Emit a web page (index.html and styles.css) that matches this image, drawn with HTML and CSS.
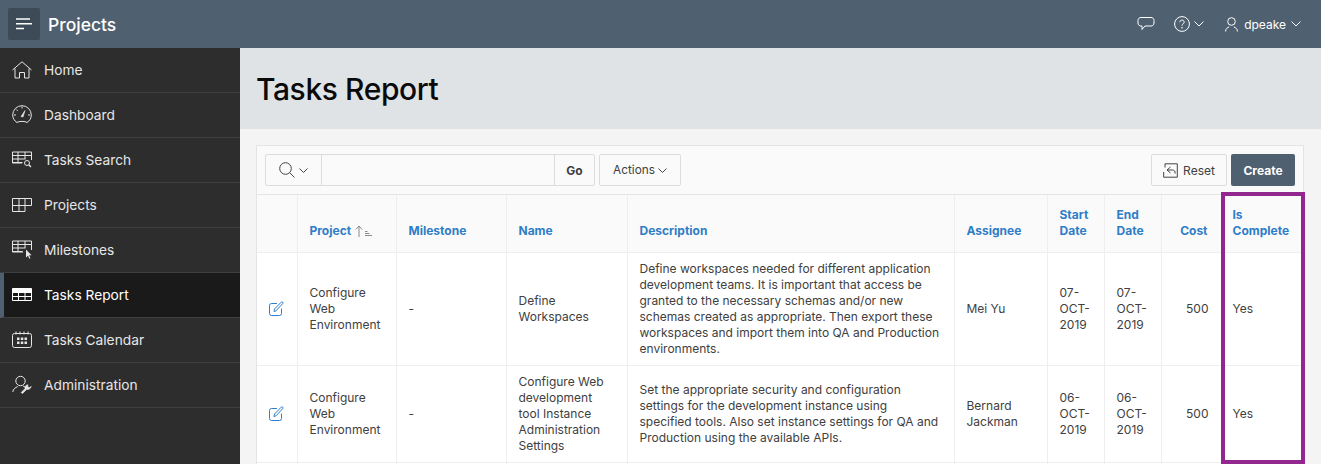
FILE: index.html
```html
<!DOCTYPE html>
<html lang="en">
<head>
  <meta charset="UTF-8">
  <title>Tasks Report</title>
  <link rel="stylesheet" href="styles.css">
</head>
<body>
  <header class="topbar">
    <button class="menu-btn" aria-label="Menu">
      <svg width="16" height="12" viewBox="0 0 16 12"><path d="M0 1h14M0 5.800h16M0 10.500h8" stroke="#fff" stroke-width="1.600" fill="none"/></svg>
    </button>
    <span class="app-name">Projects</span>
    <div class="top-actions">
      <svg class="top-chat" width="18" height="16" viewBox="0 0 18 16"><path d="M4 1.500h10c1.800 0 3 1.200 3 3v2.500c0 1.800-1.200 3-3 3H8l-3 3.500v-3.500H4c-1.800 0-3-1.200-3-3V4.500c0-1.800 1.200-3 3-3z" stroke="#fff" fill="none"/></svg>
      <svg class="top-help" width="16" height="16" viewBox="0 0 16 16"><circle cx="8" cy="8" r="7.400" stroke="#fff" fill="none"/><path d="M5.800 6.200c0-1.300 1-2.100 2.200-2.100s2.200.8 2.200 2c0 1.700-2.200 1.700-2.200 3.500" stroke="#fff" fill="none"/><circle cx="8" cy="11.700" r=".8" fill="#fff"/></svg>
      <svg class="chev top-chev" width="10" height="6" viewBox="0 0 10 6"><path d="M.5.500 5 5 9.500.500" stroke="#fff" fill="none"/></svg>
      <svg class="top-user" width="13" height="15" viewBox="0 0 13 15"><circle cx="6.500" cy="4.500" r="3.800" stroke="#fff" fill="none"/><path d="M.6 14.500c0-2.800 1.800-3.900 3.500-4.600M12.400 14.500c0-2.800-1.800-3.900-3.500-4.600" stroke="#fff" fill="none"/></svg>
      <span class="user-name">dpeake</span>
      <svg class="chev" width="10" height="6" viewBox="0 0 10 6"><path d="M.5.500 5 5 9.500.500" stroke="#fff" fill="none"/></svg>
    </div>
  </header>

  <div class="layout">
    <nav class="sidebar">
      <a class="nav-item">
        <svg width="20" height="18" viewBox="0 0 20 18"><path d="M.5 9 10 .8 19.500 9M3 7.500V17h4.500v-5.500h5V17H17V7.500" stroke="#e6e6e6" fill="none"/></svg>
        Home
      </a>
      <a class="nav-item">
        <svg width="20" height="20" viewBox="0 0 20 20"><path d="M5 17.500c-2.600-1.600-4.300-4.300-4.300-7.500a9.300 9.300 0 0 1 18.600 0c0 3.200-1.700 5.900-4.300 7.500-1.400-1.500-8.600-1.500-10 0z" stroke="#e6e6e6" fill="none"/><path d="M9 11.500 13 5.500 11 12z" stroke="#e6e6e6" fill="#e6e6e6" stroke-width=".6"/><path d="M10 1.500v2M2 10h2M16 10h2M4.300 4.500l1.400 1.400" stroke="#e6e6e6" fill="none"/></svg>
        Dashboard
      </a>
      <a class="nav-item">
        <svg width="20" height="18" viewBox="0 0 20 18"><path d="M10 12H.5V1h19v8M.5 4.500h19M.5 8h13M.5 11.500h10M6 1v11M13 1v7" stroke="#e6e6e6" fill="none"/><circle cx="15" cy="12" r="2.500" stroke="#e6e6e6" fill="none"/><path d="M16.800 13.800 19 16" stroke="#e6e6e6" stroke-width="1.300"/></svg>
        Tasks Search
      </a>
      <a class="nav-item">
        <svg width="20" height="14" viewBox="0 0 20 14"><path d="M.5.500h19v7h-6.500v6H.5zM.5 7.500H13M7 .5v13M13 .5v7" stroke="#e6e6e6" fill="none"/></svg>
        Projects
      </a>
      <a class="nav-item">
        <svg width="20" height="20" viewBox="0 0 20 20"><path d="M11 12H.5V1h19v9M.5 4.500h19M.5 8h13M.5 11.500h10M6 1v11M13 1v7" stroke="#e6e6e6" fill="none"/><path d="M14 9.500v8l2-1.800 1.400 3 1-.5-1.300-2.900h2.500z" fill="#e6e6e6"/></svg>
        Milestones
      </a>
      <a class="nav-item nav-item-active">
        <svg width="20" height="13" viewBox="0 0 20 13"><path d="M.5.500h19v12H.5zM.5 4.500h19M.5 8.500h19M6.500 4.500v8M13 4.500v8" stroke="#fff" fill="none"/><path d="M.5.500h19v4H.5z" fill="#fff"/></svg>
        Tasks Report
      </a>
      <a class="nav-item">
        <svg width="20" height="17" viewBox="0 0 20 17"><rect x=".5" y="2.500" width="19" height="14" rx="2" stroke="#e6e6e6" fill="none"/><path d="M4 .5v3M8 .5v3M12 .5v3M16 .5v3" stroke="#e6e6e6"/><path d="M5 6.500h2.500v2.500H5zM8.800 6.500h2.500v2.500H8.800zM12.500 6.500H15v2.500h-2.500zM5 10.500h2.500V13H5zM8.800 10.500h2.500V13H8.800zM12.500 10.500H15V13h-2.500z" fill="#e6e6e6"/></svg>
        Tasks Calendar
      </a>
      <a class="nav-item">
        <svg width="20" height="20" viewBox="0 0 20 20"><circle cx="8.500" cy="6" r="4.700" stroke="#e6e6e6" fill="none"/><path d="M.8 17c.2-3 2.500-4.500 5-5.400M11 11c.8.300 1.400.6 2 1" stroke="#e6e6e6" fill="none"/><path d="m10.500 18.500 4.300-4.300c1.300.6 3.800-.2 4.400-2.700l-2 1.200-1.500-1 .2-1.900c-2.100.2-3.500 2-2.800 3.800l-3.900 3.900z" stroke="#e6e6e6" stroke-width=".7" fill="#e6e6e6"/></svg>
        Administration
      </a>
    </nav>

    <main class="content">
      <div class="title-band">
        <h1>Tasks Report</h1>
      </div>
      <section class="report">
        <div class="toolbar">
          <div class="search-group">
            <div class="search-col">
              <svg width="16" height="16" viewBox="0 0 16 16"><circle cx="6.500" cy="6.500" r="5.800" stroke="#444" fill="none"/><path d="M10.800 10.800 15.500 15.500" stroke="#444" fill="none"/></svg>
              <svg width="9" height="5" viewBox="0 0 9 5"><path d="M.5.500 4.500 4.500 8.500.500" stroke="#444" fill="none"/></svg>
            </div>
            <div class="search-input"></div>
            <div class="go-btn">Go</div>
          </div>
          <div class="actions-btn">
            Actions
            <svg width="9" height="5" viewBox="0 0 9 5"><path d="M.5.500 4.500 4.500 8.500.500" stroke="#444" fill="none"/></svg>
          </div>
          <div class="toolbar-spacer"></div>
          <div class="reset-btn">
            <svg width="15" height="15" viewBox="0 0 15 15"><path d="M2 4.500V.8h12.300v13.400H.7V9M7.500 4 4 7l3.500 3M4 7h5.500c2 0 2.700 1.300 2.700 3.500" stroke="#444" fill="none"/></svg>
            Reset
          </div>
          <div class="create-btn">Create</div>
        </div>

        <table class="grid">
          <colgroup>
            <col class="col-link">
            <col class="col-project">
            <col class="col-milestone">
            <col class="col-name">
            <col class="col-desc">
            <col class="col-assignee">
            <col class="col-start">
            <col class="col-end">
            <col class="col-cost">
            <col class="col-done">
          </colgroup>
          <thead>
            <tr>
              <th></th>
              <th>Project
                <svg class="sort-icon" width="17" height="12" viewBox="0 0 17 12"><path d="M4 12V1M.8 4.500 4 1l3.200 3.500" stroke="#8a8a8a" fill="none"/><path d="M10 6.500h2.500M10 8.500h4.500M10 10.500h7" stroke="#8a8a8a" fill="none"/></svg>
              </th>
              <th>Milestone</th>
              <th>Name</th>
              <th>Description</th>
              <th>Assignee</th>
              <th>Start Date</th>
              <th>End Date</th>
              <th class="num">Cost</th>
              <th>Is Complete</th>
            </tr>
          </thead>
          <tbody>
            <tr class="row-one">
              <td class="link-cell"><svg width="15" height="15" viewBox="0 0 15 15"><path d="M8 2.500H2.500a2 2 0 0 0-2 2v8a2 2 0 0 0 2 2h8a2 2 0 0 0 2-2V7.500" stroke="#2f7dd1" fill="none"/><path d="M5 10.500 5.500 8 12.200 1.200c.5-.5 1.100-.5 1.500 0 .5.500.5 1 0 1.500L7 9.800z" stroke="#2f7dd1" fill="none"/></svg></td>
              <td>Configure Web Environment</td>
              <td>-</td>
              <td>Define Workspaces</td>
              <td class="desc-cell">Define workspaces needed for different application development teams. It is important that access be granted to the necessary schemas and/or new schemas created as appropriate. Then export these workspaces and import them into QA and Production environments.</td>
              <td>Mei Yu</td>
              <td>07-OCT-2019</td>
              <td>07-OCT-2019</td>
              <td class="num">500</td>
              <td>Yes</td>
            </tr>
            <tr class="row-two">
              <td class="link-cell"><svg width="15" height="15" viewBox="0 0 15 15"><path d="M8 2.500H2.500a2 2 0 0 0-2 2v8a2 2 0 0 0 2 2h8a2 2 0 0 0 2-2V7.500" stroke="#2f7dd1" fill="none"/><path d="M5 10.500 5.500 8 12.200 1.200c.5-.5 1.100-.5 1.500 0 .5.500.5 1 0 1.500L7 9.800z" stroke="#2f7dd1" fill="none"/></svg></td>
              <td>Configure Web Environment</td>
              <td>-</td>
              <td>Configure Web development tool Instance Administration Settings</td>
              <td class="desc-cell">Set the appropriate security and configuration settings for the development instance using specified tools. Also set instance settings for QA and Production using the available APIs.</td>
              <td>Bernard Jackman</td>
              <td>06-OCT-2019</td>
              <td>06-OCT-2019</td>
              <td class="num">500</td>
              <td>Yes</td>
            </tr>
            <tr class="row-next">
              <td></td><td></td><td></td><td></td><td></td><td></td><td></td><td></td><td></td><td></td>
            </tr>
          </tbody>
        </table>
      </section>
    </main>
  </div>

  <div class="highlight-box"></div>
</body>
</html>
```

FILE: styles.css
```css
html, body {
  height: 464px;
  overflow: hidden;
}
body {
  margin: 0;
  font-family: Inter, "Liberation Sans", sans-serif;
  font-size: 12px;
  color: #404040;
  background-color: #f4f4f4;
}
svg {
  display: block;
  flex-shrink: 0;
}
.topbar {
  height: 48px;
  display: flex;
  align-items: center;
  padding: 0 20px 0 8px;
  background-color: #4f6070;
  color: #fff;
}
.menu-btn {
  width: 32px;
  height: 32px;
  display: flex;
  align-items: center;
  justify-content: center;
  padding: 0;
  border: none;
  border-radius: 2px;
  background-color: #3d4a57;
}
.app-name {
  margin-left: 8px;
  font-size: 17.5px;
  font-weight: 500;
}
.top-actions {
  margin-left: auto;
  display: flex;
  align-items: center;
}
.top-help {
  margin-left: 19px;
}
.top-chev {
  margin: 0 0 0 4px;
}
.top-user {
  margin-left: 21px;
}
.user-name {
  margin: 0 5px 0 6px;
  font-size: 12px;
}
.layout {
  display: flex;
  height: 416px;
  overflow: hidden;
}
.sidebar {
  width: 240px;
  flex-shrink: 0;
  background-color: #2d2d2d;
}
.nav-item {
  height: 45px;
  box-sizing: border-box;
  display: flex;
  align-items: center;
  gap: 12px;
  padding-left: 12px;
  padding-bottom: 1px;
  border-bottom: 1px solid #3f3f3f;
  font-size: 13.75px;
  color: #e6e6e6;
}
.nav-item-active {
  padding-left: 8px;
  border-left: 4px solid #4f6070;
  background-color: #1a1a1a;
  color: #fff;
}
.content {
  flex: 1;
  min-width: 0;
}
.title-band {
  height: 81px;
  box-sizing: border-box;
  display: flex;
  align-items: center;
  padding-left: 16px;
  background-color: #dfe3e6;
}
h1 {
  margin: 0;
  font-size: 30px;
  font-weight: 500;
  letter-spacing: -.4px;
  color: #0a0a0a;
}
.report {
  margin: 16px 17px 0 16px;
  border: 1px solid #e4e4e4;
  border-bottom: none;
  background-color: #fff;
}
.toolbar {
  height: 49px;
  box-sizing: border-box;
  display: flex;
  align-items: flex-start;
  padding: 8px 8px 0;
  background-color: #fafafa;
  border-bottom: 1px solid #e4e4e4;
}
.search-group {
  display: flex;
  height: 32px;
  box-sizing: border-box;
  border: 1px solid #dcdcdc;
  border-radius: 2px;
  background-color: #fafafa;
}
.search-col {
  width: 55px;
  display: flex;
  align-items: center;
  justify-content: center;
  gap: 4px;
  border-right: 1px solid #dcdcdc;
}
.search-input {
  width: 232px;
}
.go-btn {
  width: 39px;
  display: flex;
  align-items: center;
  justify-content: center;
  border-left: 1px solid #dcdcdc;
  font-weight: 700;
}
.actions-btn, .reset-btn {
  height: 32px;
  box-sizing: border-box;
  display: flex;
  align-items: center;
  border: 1px solid #dcdcdc;
  border-radius: 2px;
  background-color: #fafafa;
}
.actions-btn {
  width: 82px;
  justify-content: center;
  gap: 3px;
  margin-left: 4px;
  font-size: 11.8px;
}
.toolbar-spacer {
  flex: 1;
}
.reset-btn {
  width: 76px;
  justify-content: center;
  gap: 5px;
}
.create-btn {
  width: 64px;
  height: 32px;
  display: flex;
  align-items: center;
  justify-content: center;
  margin-left: 4px;
  border-radius: 2px;
  background-color: #4f6070;
  color: #fff;
  font-weight: 700;
}
.grid {
  width: 1047px;
  table-layout: fixed;
  border-collapse: collapse;
}
.col-link { width: 40px; }
.col-project { width: 99px; }
.col-milestone { width: 110px; }
.col-name { width: 121px; }
.col-desc { width: 327px; }
.col-assignee { width: 93px; }
.col-start { width: 57px; }
.col-end { width: 57px; }
.col-cost { width: 60px; }
.col-done { width: 83px; }
th, td {
  padding: 8px 12px;
  border: 1px solid #eeeeee;
  text-align: left;
  line-height: 16px;
}
th:first-child, td:first-child {
  border-left: none;
}
th:last-child, td:last-child {
  padding-left: 11px;
}
th {
  height: 36px;
  padding-bottom: 13px;
  vertical-align: bottom;
  border-top: none;
  background-color: #fafafa;
  color: #2f7dc6;
  font-weight: 700;
}
.sort-icon {
  display: inline-block;
  vertical-align: -2px;
  margin-left: 1px;
}
td.num, th.num {
  text-align: right;
}
th.num {
  padding-right: 13px;
}
td.desc-cell {
  padding-right: 13px;
}
.row-one td {
  height: 95px;
}
.row-two td {
  height: 80px;
}
.row-next td {
  height: 30px;
}
.link-cell svg {
  margin: -2px auto 0;
}
td.link-cell {
  padding: 0;
}
.highlight-box {
  position: absolute;
  left: 1221px;
  top: 192px;
  width: 84px;
  height: 272px;
  box-sizing: border-box;
  border: 4px solid #92278f;
  pointer-events: none;
}
```
